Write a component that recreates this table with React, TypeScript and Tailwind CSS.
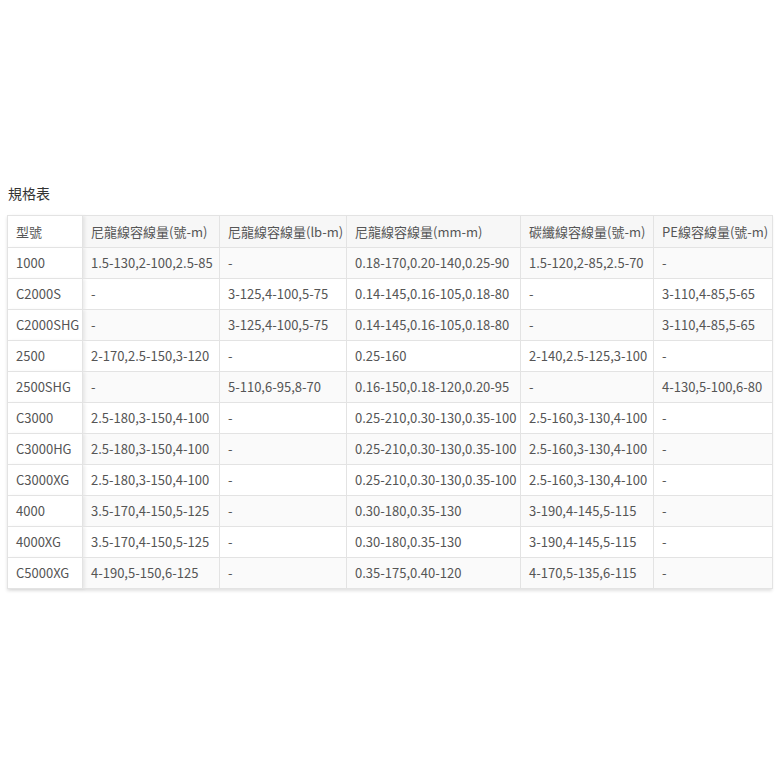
const headers = [
  "型號",
  "尼龍線容線量(號-m)",
  "尼龍線容線量(lb-m)",
  "尼龍線容線量(mm-m)",
  "碳纖線容線量(號-m)",
  "PE線容線量(號-m)",
];

const rows: string[][] = [
  ["1000", "1.5-130,2-100,2.5-85", "-", "0.18-170,0.20-140,0.25-90", "1.5-120,2-85,2.5-70", "-"],
  ["C2000S", "-", "3-125,4-100,5-75", "0.14-145,0.16-105,0.18-80", "-", "3-110,4-85,5-65"],
  ["C2000SHG", "-", "3-125,4-100,5-75", "0.14-145,0.16-105,0.18-80", "-", "3-110,4-85,5-65"],
  ["2500", "2-170,2.5-150,3-120", "-", "0.25-160", "2-140,2.5-125,3-100", "-"],
  ["2500SHG", "-", "5-110,6-95,8-70", "0.16-150,0.18-120,0.20-95", "-", "4-130,5-100,6-80"],
  ["C3000", "2.5-180,3-150,4-100", "-", "0.25-210,0.30-130,0.35-100", "2.5-160,3-130,4-100", "-"],
  ["C3000HG", "2.5-180,3-150,4-100", "-", "0.25-210,0.30-130,0.35-100", "2.5-160,3-130,4-100", "-"],
  ["C3000XG", "2.5-180,3-150,4-100", "-", "0.25-210,0.30-130,0.35-100", "2.5-160,3-130,4-100", "-"],
  ["4000", "3.5-170,4-150,5-125", "-", "0.30-180,0.35-130", "3-190,4-145,5-115", "-"],
  ["4000XG", "3.5-170,4-150,5-125", "-", "0.30-180,0.35-130", "3-190,4-145,5-115", "-"],
  ["C5000XG", "4-190,5-150,6-125", "-", "0.35-175,0.40-120", "4-170,5-135,6-115", "-"],
];

const widths = ["w-[75px]", "w-[137px]", "w-[127px]", "w-[174px]", "w-[133px]", "w-[119px]"];

export default function App() {
  return (
    <div
      className="min-h-[777px] bg-white pt-[183px] text-[#555]"
      style={{ fontFamily: '"Noto Sans CJK TC", "Noto Sans", sans-serif' }}
    >
      <h3 className="px-2 text-[14px] leading-5 font-normal text-[#333]">規格表</h3>

      <div className="mt-3 ml-[7px] w-[765px] shadow-[0_2px_3px_rgba(0,0,0,0.12)]">
        <table className="w-full table-fixed border-collapse text-[13px]">
          <thead>
            <tr className="h-[32px] bg-[#f7f7f7]">
              {headers.map((h, i) => (
                <th
                  key={h}
                  className={`${widths[i]} border border-[#e3e3e3] px-2 text-left font-normal whitespace-nowrap ${
                    i === 0 ? "bg-white shadow-[2px_0_3px_rgba(0,0,0,0.08)]" : ""
                  }`}
                >
                  {h}
                </th>
              ))}
            </tr>
          </thead>
          <tbody>
            {rows.map((r, ri) => (
              <tr key={r[0]} className={`h-[31px] ${ri % 2 === 0 ? "bg-[#fafafa]" : "bg-white"}`}>
                {r.map((c, ci) => (
                  <td
                    key={ci}
                    className={`border border-[#e3e3e3] px-2 whitespace-nowrap ${
                      ci === 0 ? "bg-white shadow-[2px_0_3px_rgba(0,0,0,0.08)]" : ""
                    }`}
                  >
                    {c}
                  </td>
                ))}
              </tr>
            ))}
          </tbody>
        </table>
      </div>
    </div>
  );
}
